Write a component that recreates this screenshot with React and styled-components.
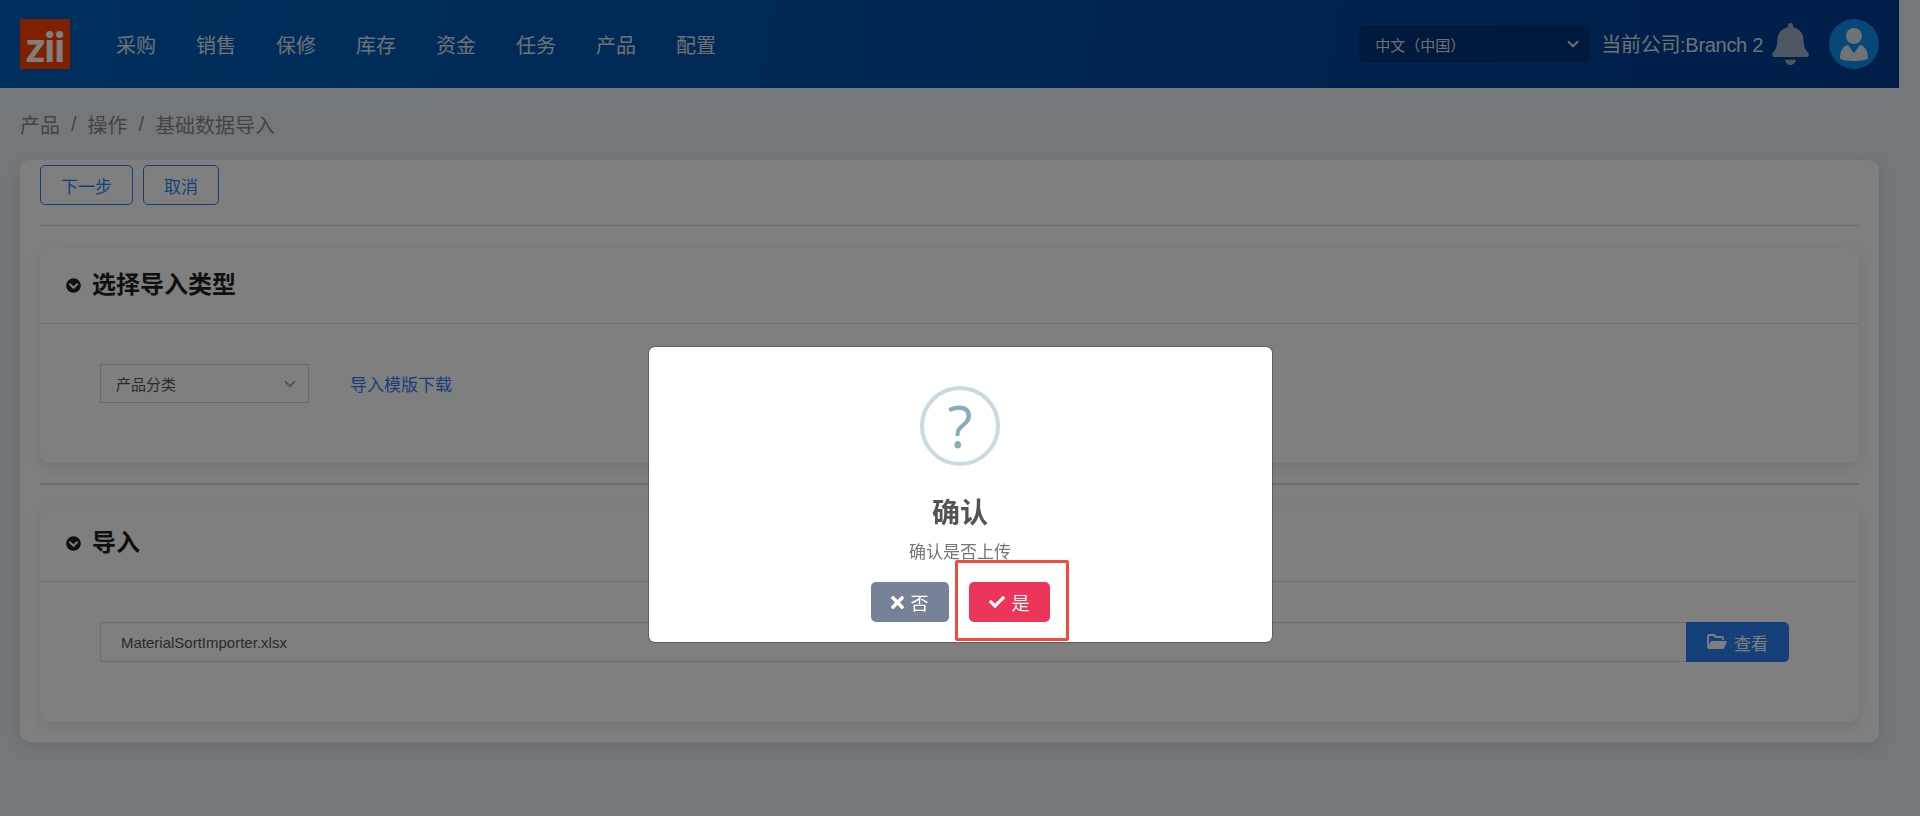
import React from "react";
import styled, { createGlobalStyle } from "styled-components";
import { FaBell, FaCheck, FaChevronCircleDown, FaTimes } from "react-icons/fa";
import { ChevronDown } from "lucide-react";

const GlobalStyle = createGlobalStyle`
  html, body {
    margin: 0;
    height: 816px;
    overflow: hidden;
    background: #eaf0f4;
  }
  body {
    font-family: "Liberation Sans", "Noto Sans CJK SC", sans-serif;
    color: #888;
  }
`;

const Page = styled.div`
  width: 1899px;
  height: 816px;
`;

const Header = styled.header`
  height: 88px;
  display: flex;
  align-items: center;
  padding: 0 20px;
  box-sizing: border-box;
  background: linear-gradient(100deg, #0060bc 0%, #003c90 100%);
`;

const Logo = styled.div`
  width: 50px;
  height: 50px;
  padding-top: 4px;
  box-sizing: border-box;
  flex: none;
  background: #ff4000;
  color: #fff;
  display: flex;
  align-items: center;
  justify-content: center;
  font-family: Lato, sans-serif;
  font-weight: 900;
  font-size: 42px;
  letter-spacing: -1px;
  line-height: 1;
`;

const Nav = styled.nav`
  display: flex;
  gap: 40px;
  margin-left: 46px;
`;

const NavItem = styled.a`
  font-size: 20px;
  color: #dce4ea;
`;

const HeaderRight = styled.div`
  margin-left: auto;
  display: flex;
  align-items: center;
`;

const LangSelect = styled.div`
  width: 231px;
  height: 38px;
  box-sizing: border-box;
  padding: 0 8px 0 16px;
  display: flex;
  align-items: center;
  justify-content: space-between;
  border-radius: 6px;
  background: #02327a;
  color: #dce4ea;
  font-size: 15px;
`;

const Company = styled.span`
  margin-left: 11px;
  padding-bottom: 2px;
  font-size: 20px;
  letter-spacing: -0.3px;
  color: #dce4ea;
  white-space: nowrap;
`;

const Bell = styled(FaBell)`
  margin-left: 9px;
  width: 37px;
  height: 42px;
  color: #9cb0c8;
`;

const Avatar = styled.div`
  margin-left: 20px;
  width: 50px;
  height: 50px;
  border-radius: 50%;
  background: #0a8fee;
  color: #dfe6e9;
  display: flex;
  align-items: center;
  justify-content: center;
`;

const Breadcrumb = styled.div`
  height: 72px;
  padding-left: 20px;
  display: flex;
  align-items: center;
  gap: 11px;
  font-size: 20px;
  color: #888;
`;

const OuterCard = styled.main`
  margin: 0 20px;
  padding: 5px 20px 20px;
  background: #fff;
  border-radius: 10px;
  box-shadow: 0 5px 20px rgba(0, 0, 0, 0.1);
`;

const Toolbar = styled.div`
  display: flex;
  gap: 10px;
`;

const OutlineButton = styled.button`
  height: 40px;
  padding: 0 20px;
  font: inherit;
  font-size: 17px;
  color: #2d7ff5;
  background: transparent;
  border: 1px solid #2d7ff5;
  border-radius: 5px;
`;

const Rule = styled.hr`
  margin: 20px 0 ${(p) => (p.$thick ? 21 : 22)}px;
  border: 0;
  height: ${(p) => (p.$thick ? 2 : 1)}px;
  background: #cfd8e2;
`;

const Section = styled.section`
  background: #fff;
  border-radius: 10px;
  box-shadow: 0 5px 15px rgba(0, 0, 0, 0.1);
`;

const SectionHead = styled.div`
  height: 76px;
  box-sizing: border-box;
  padding: 0 0 1px 26px;
  display: flex;
  align-items: center;
  gap: 11px;
  border-bottom: 1px solid #dfe3e8;
  color: #1e1e1e;
`;

const SectionTitle = styled.h2`
  margin: 0;
  font-size: 24px;
  font-weight: 700;
  line-height: 1;
`;

const SectionBody = styled.div`
  padding: 40px 70px 60px 60px;
  display: flex;
  align-items: center;
`;

const TypeSelect = styled.div`
  width: 209px;
  height: 39px;
  box-sizing: border-box;
  padding: 0 9px 0 15px;
  display: flex;
  align-items: center;
  justify-content: space-between;
  border: 1px solid #c8d4e4;
  font-size: 15px;
  color: #555;
`;

const DownloadLink = styled.a`
  margin-left: 41px;
  font-size: 17px;
  color: #2f7bf0;
`;

const FileInput = styled.div`
  flex: 1;
  height: 40px;
  box-sizing: border-box;
  padding-left: 20px;
  display: flex;
  align-items: center;
  border: 1px solid #d5dbe2;
  border-right: 0;
  font-size: 15px;
  color: #555;
`;

const BrowseButton = styled.button`
  width: 103px;
  height: 40px;
  padding: 0;
  display: flex;
  align-items: center;
  justify-content: center;
  gap: 7px;
  font: inherit;
  font-size: 17px;
  color: #fff;
  background: #2a80f2;
  border: 0;
  border-radius: 0 5px 5px 0;
`;

const Overlay = styled.div`
  position: fixed;
  inset: 0;
  padding-top: 347px;
  display: flex;
  justify-content: center;
  align-items: flex-start;
  background: rgba(0, 0, 0, 0.5);
`;

const Modal = styled.div`
  position: relative;
  width: 623px;
  height: 295px;
  box-sizing: border-box;
  padding-top: 39px;
  display: flex;
  flex-direction: column;
  align-items: center;
  background: #fff;
  border-radius: 6px;
  box-shadow: 0 0 0 1px rgba(0, 0, 0, 0.25);
`;

const QuestionIcon = styled.div`
  width: 80px;
  height: 80px;
  box-sizing: border-box;
  display: flex;
  align-items: center;
  justify-content: center;
  border: 4px solid #c9dae1;
  border-radius: 50%;
  color: #87adbd;
  font-family: "Open Sans", sans-serif;
  font-size: 58px;
  line-height: 1;
`;

const ModalTitle = styled.h2`
  margin: 28px 0 0;
  font-size: 28px;
  line-height: 40px;
  font-weight: 700;
  color: #545454;
`;

const ModalText = styled.div`
  margin-top: 7px;
  font-size: 17px;
  line-height: 24px;
  color: #757575;
`;

const ModalButtons = styled.div`
  margin-top: 17px;
  display: flex;
  gap: 20px;
`;

const ModalButton = styled.button`
  height: 40px;
  padding: 0 20px;
  display: flex;
  align-items: center;
  gap: 7px;
  font: inherit;
  font-size: 18px;
  color: #fff;
  background: ${(p) => p.$color};
  border: 0;
  border-radius: 5px;
`;

const CloseIcon = styled(FaTimes)`
  width: 13px;
  height: 19px;
`;

// red box drawn over the screenshot by hand
const Annotation = styled.div`
  position: absolute;
  left: 306px;
  top: 213px;
  width: 114px;
  height: 81px;
  box-sizing: border-box;
  border: 3px solid #f44c3c;
  border-radius: 2px;
`;

const navItems = ["采购", "销售", "保修", "库存", "资金", "任务", "产品", "配置"];

const UserIcon = () => (
  <svg width="28" height="33" viewBox="0 0 28 33" fill="currentColor">
    <circle cx="14" cy="8" r="8" />
    <path d="M8 17 L14 25 L20 17 C25 18 28 23 28 30 C28 32 20 33 14 33 C8 33 0 32 0 30 C0 23 3 18 8 17 Z" />
  </svg>
);

const FolderIcon = () => (
  <svg width="20" height="16" viewBox="0 0 20 16">
    <path d="M1 14V2.5C1 1.700 1.700 1 2.500 1H7l2 2h5.500c.8 0 1.500 .7 1.500 1.500V6" fill="none" stroke="currentColor" strokeWidth="1.8" />
    <path d="M5 7h14c.7 0 1.100 .7 .8 1.300L17 14c-.3 .6-1 1-1.700 1H1.500c-.7 0-1.100-.7-.8-1.300L3.500 8C3.800 7.400 4.300 7 5 7Z" fill="currentColor" />
  </svg>
);

const ImportSection = ({ title, children }) => (
  <Section>
    <SectionHead>
      <FaChevronCircleDown size={15} />
      <SectionTitle>{title}</SectionTitle>
    </SectionHead>
    <SectionBody>{children}</SectionBody>
  </Section>
);

const App = () => {
  return (
    <>
      <GlobalStyle />
      <Page>
        <Header>
          <Logo>zii</Logo>
          <Nav>
            {navItems.map((item) => (
              <NavItem key={item}>{item}</NavItem>
            ))}
          </Nav>
          <HeaderRight>
            <LangSelect>
              中文（中国）
              <ChevronDown size={18} strokeWidth={2.5} />
            </LangSelect>
            <Company>当前公司:Branch 2</Company>
            <Bell />
            <Avatar>
              <UserIcon />
            </Avatar>
          </HeaderRight>
        </Header>
        <Breadcrumb>
          <span>产品</span>
          <span>/</span>
          <span>操作</span>
          <span>/</span>
          <span>基础数据导入</span>
        </Breadcrumb>
        <OuterCard>
          <Toolbar>
            <OutlineButton>下一步</OutlineButton>
            <OutlineButton>取消</OutlineButton>
          </Toolbar>
          <Rule />
          <ImportSection title="选择导入类型">
            <TypeSelect>
              产品分类
              <ChevronDown size={18} color="#aaa" strokeWidth={2.5} />
            </TypeSelect>
            <DownloadLink>导入模版下载</DownloadLink>
          </ImportSection>
          <Rule $thick />
          <ImportSection title="导入">
            <FileInput>MaterialSortImporter.xlsx</FileInput>
            <BrowseButton>
              <FolderIcon />
              查看
            </BrowseButton>
          </ImportSection>
        </OuterCard>
      </Page>
      <Overlay>
        <Modal>
          <QuestionIcon>?</QuestionIcon>
          <ModalTitle>确认</ModalTitle>
          <ModalText>确认是否上传</ModalText>
          <ModalButtons>
            <ModalButton $color="#778299">
              <CloseIcon />否
            </ModalButton>
            <ModalButton $color="#eb3659">
              <FaCheck size={16} />是
            </ModalButton>
          </ModalButtons>
          <Annotation />
        </Modal>
      </Overlay>
    </>
  );
};

export default App;
